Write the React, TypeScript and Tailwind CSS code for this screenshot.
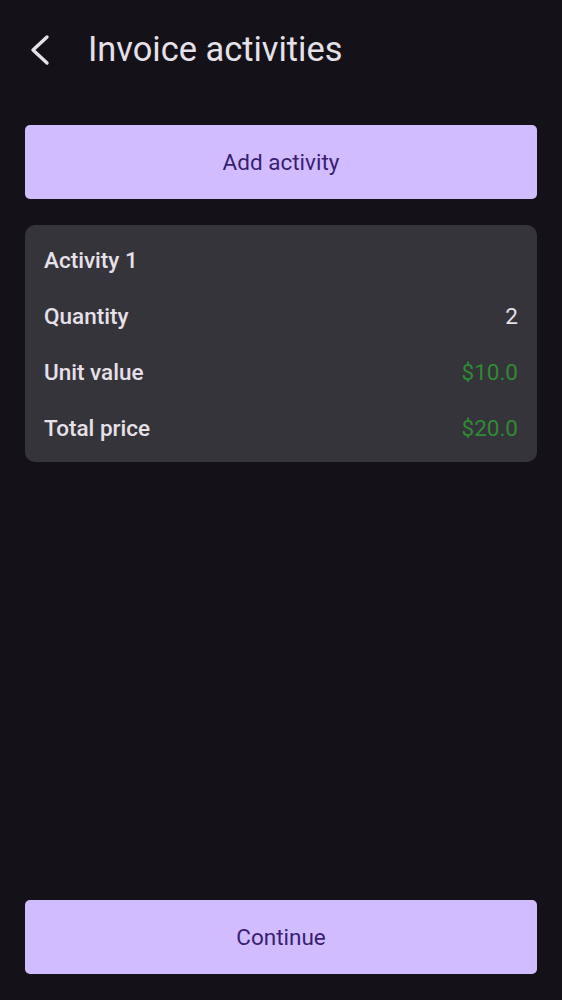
import React from "react";

function BackArrow() {
  return (
    <svg width="24" height="32" viewBox="0 0 24 32" fill="none" aria-hidden="true">
      <polyline
        points="19,3 5,16 19,29"
        stroke="#E6E0E9"
        strokeWidth="3.4"
        strokeLinecap="round"
        strokeLinejoin="round"
      />
    </svg>
  );
}

function Row({ label, value, green }: { label: string; value?: string; green?: boolean }) {
  return (
    <div className="flex h-14 items-center justify-between">
      <span className="text-[22.5px] font-medium text-[#E6E0E9]">{label}</span>
      {value && (
        <span className={`text-[22.5px] ${green ? "text-[#2E8B33]" : "text-[#E6E0E9]"}`}>{value}</span>
      )}
    </div>
  );
}

export default function App() {
  return (
    <div
      className="flex min-h-screen flex-col bg-[#141218] px-[25px]"
      style={{ fontFamily: "Roboto, 'Noto Sans', sans-serif" }}
    >
      <header className="flex h-[100px] items-center">
        <div className="ml-[3px] flex w-[60px] items-center">
          <BackArrow />
        </div>
        <h1 className="text-[34.4px] font-normal text-[#E6E0E9]">Invoice activities</h1>
      </header>

      <button className="mt-[25px] h-[74px] w-full rounded-[5px] bg-[#D0BCFF] pt-[2px] text-[22.5px] text-[#381E72]">
        Add activity
      </button>

      <div className="mt-[26px] rounded-[10px] bg-[#36343B] px-[19px] pb-[5px] pt-[8px]">
        <Row label="Activity 1" />
        <Row label="Quantity" value="2" />
        <Row label="Unit value" value="$10.0" green />
        <Row label="Total price" value="$20.0" green />
      </div>

      <div className="flex-1" />

      <button className="mb-[26px] h-[74px] w-full rounded-[5px] bg-[#D0BCFF] pt-[2px] text-[22.5px] text-[#381E72]">
        Continue
      </button>
    </div>
  );
}
